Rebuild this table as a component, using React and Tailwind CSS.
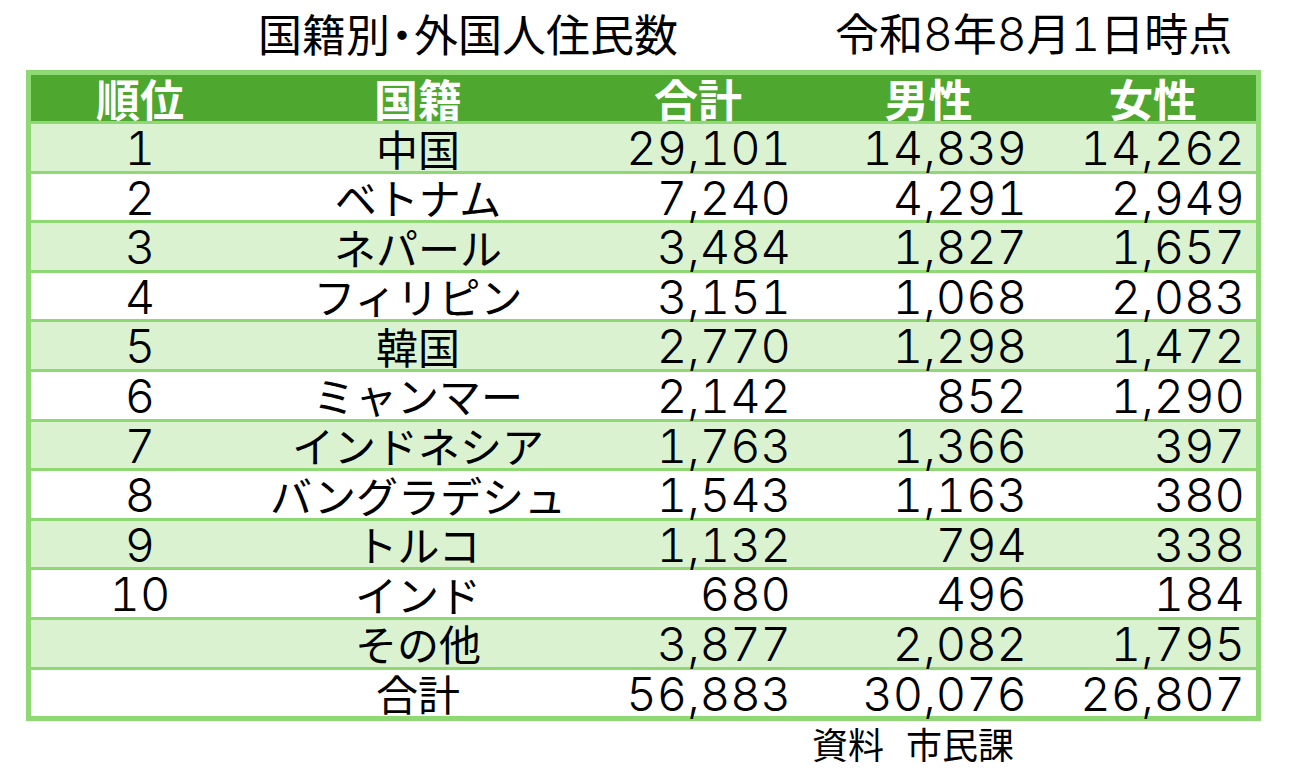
import React from "react";

const rows = [
  ["1", "中国", "29,101", "14,839", "14,262"],
  ["2", "ベトナム", "7,240", "4,291", "2,949"],
  ["3", "ネパール", "3,484", "1,827", "1,657"],
  ["4", "フィリピン", "3,151", "1,068", "2,083"],
  ["5", "韓国", "2,770", "1,298", "1,472"],
  ["6", "ミャンマー", "2,142", "852", "1,290"],
  ["7", "インドネシア", "1,763", "1,366", "397"],
  ["8", "バングラデシュ", "1,543", "1,163", "380"],
  ["9", "トルコ", "1,132", "794", "338"],
  ["10", "インド", "680", "496", "184"],
  ["", "その他", "3,877", "2,082", "1,795"],
  ["", "合計", "56,883", "30,076", "26,807"],
];

const grid = "grid grid-cols-[218px_338px_220px_243px_206px]";
const num = "font-['Inter','Noto_Sans_CJK_JP',sans-serif] font-light tabular-nums text-[47px] leading-none text-black";

export default function App() {
  return (
    <div className="w-[1290px] h-[772px] bg-white font-['Noto_Sans_CJK_JP',sans-serif] text-black overflow-hidden">
      <div className="flex h-[70px] items-center text-[44px] leading-none pb-[4px]">
        <div className="ml-[258px] w-[577px] whitespace-nowrap">
          国籍別<span className="mx-[-10px]">・</span>外国人住民数
        </div>
        <div className="whitespace-nowrap text-[44px]">令和<span className="font-['Inter',sans-serif] font-light tabular-nums text-[46px]">8</span>年<span className="font-['Inter',sans-serif] font-light tabular-nums text-[46px]">8</span>月<span className="font-['Inter',sans-serif] font-light tabular-nums text-[46px]">1</span>日時点</div>
      </div>

      <div className="ml-[26px] w-[1235px] border-[5px] border-[#8ed973]">
        <div className={`${grid} h-[46px] bg-[#4ea72e] text-white font-bold text-[44px] leading-none items-center`}>
          <div className="text-center">順位</div>
          <div className="text-center">国籍</div>
          <div className="text-center pl-[2px]">合計</div>
          <div className="text-center">男性</div>
          <div className="text-center">女性</div>
        </div>
        {rows.map((r, i) => (
          <div
            key={i}
            className={`${grid} h-[49.6px] border-t-[3px] border-[#8ed973] items-center ${i % 2 === 0 ? "bg-[#daf2d0]" : "bg-white"}`}
          >
            <div className={`${num} text-center`}>{r[0]}</div>
            <div className="text-center text-[42px] leading-none whitespace-nowrap">{r[1]}</div>
            <div className={`${num} text-right pr-[16px]`}>{r[2]}</div>
            <div className={`${num} text-right pr-[23px]`}>{r[3]}</div>
            <div className={`${num} text-right pr-[11px]`}>{r[4]}</div>
          </div>
        ))}
      </div>

      <div className="ml-[812px] mt-[4px] text-[36px] leading-none whitespace-nowrap">
        資料<span className="ml-[22px]">市民課</span>
      </div>
    </div>
  );
}
